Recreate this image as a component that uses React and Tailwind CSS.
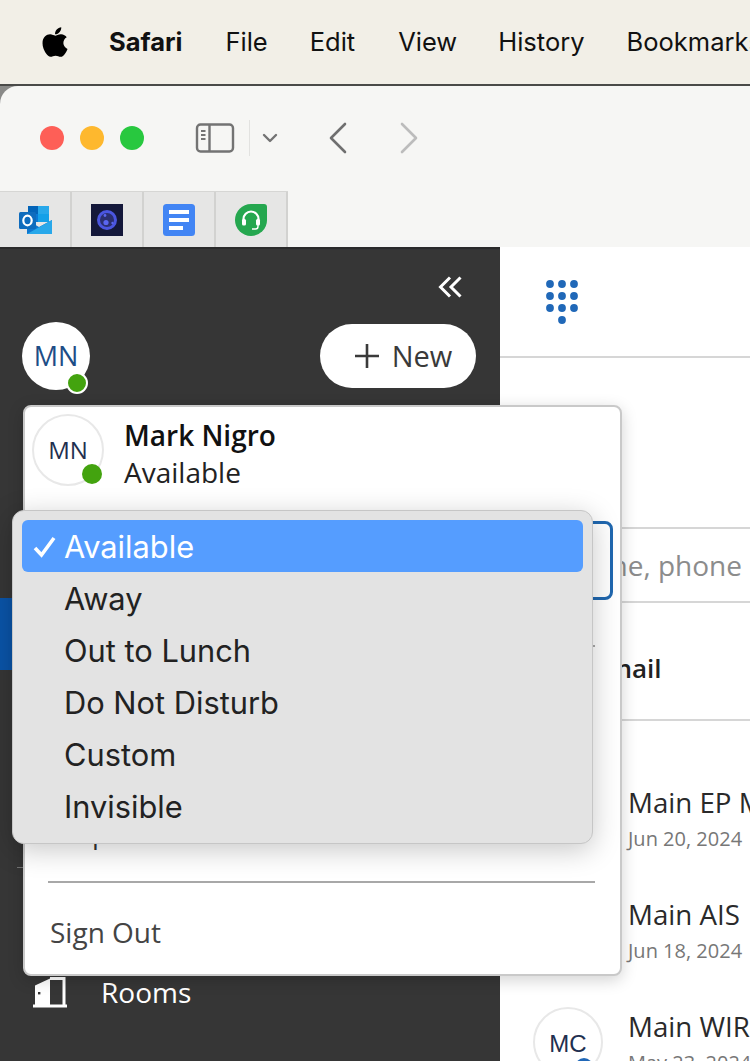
import React from "react";
import { FaApple } from "react-icons/fa";

const sans = "font-['Open_Sans',sans-serif]";
const sys = "font-['Inter',sans-serif]";

function SidebarIcon() {
  return (
    <svg width="40" height="32" viewBox="0 0 40 32" fill="none" stroke="#737373">
      <rect x="2" y="2.5" width="36" height="27" rx="3.5" strokeWidth="2.4" />
      <path d="M14.5 3v26" strokeWidth="2.4" />
      <path d="M6 9h4.5M6 13h4.5M6 17h4.5" strokeWidth="1.8" />
    </svg>
  );
}

function Outlook() {
  return (
    <svg width="33" height="30" viewBox="0 0 33 30">
      <rect x="9" y="1" width="21" height="16" fill="#0a78d4" />
      <rect x="9" y="1" width="10" height="8" fill="#0364b8" />
      <rect x="19" y="1" width="11" height="8" fill="#28a8ea" />
      <rect x="19" y="9" width="11" height="8" fill="#14a0e8" />
      <path d="M8 15l12 7 13-7v14H8z" fill="#0f78d0" />
      <path d="M8 29l25-14v14z" fill="#28a8ea" />
      <rect x="0" y="7" width="17" height="17" rx="1.5" fill="#0f6cbd" />
      <ellipse cx="8.5" cy="15.5" rx="4.2" ry="4.8" fill="none" stroke="#fff" strokeWidth="2.2" />
    </svg>
  );
}

function Orbit() {
  return (
    <svg width="32" height="32" viewBox="0 0 32 32">
      <rect width="32" height="32" fill="#14183a" />
      <circle cx="16" cy="16" r="8.5" fill="#2b2f70" stroke="#4a55e0" strokeWidth="3" />
      <circle cx="15" cy="18.5" r="2.6" fill="#5a66f0" />
      <circle cx="14" cy="11.5" r="1.4" fill="#5a66f0" />
      <circle cx="21.5" cy="19" r="1.2" fill="#5a66f0" />
    </svg>
  );
}

function Docs() {
  return (
    <svg width="32" height="32" viewBox="0 0 32 32">
      <rect width="32" height="32" rx="3.5" fill="#4285f4" />
      <rect x="6" y="6" width="20" height="4" fill="#fff" />
      <rect x="6" y="14" width="20" height="4" fill="#fff" />
      <rect x="6" y="22" width="14" height="4" fill="#fff" />
    </svg>
  );
}

function Freshdesk() {
  return (
    <svg width="32" height="32" viewBox="0 0 32 32">
      <path d="M16 0h13a3 3 0 0 1 3 3v13a16 16 0 1 1-16-16z" fill="#25a74f" />
      <path d="M8.5 18v-3a7.5 7.5 0 0 1 15 0v3" fill="none" stroke="#fff" strokeWidth="2.2" />
      <rect x="7" y="15" width="4" height="6.5" rx="1.6" fill="#fff" />
      <rect x="21" y="15" width="4" height="6.5" rx="1.6" fill="#fff" />
      <path d="M23 21v1.5a2.5 2.5 0 0 1-2.5 2.5H17" fill="none" stroke="#fff" strokeWidth="1.4" />
    </svg>
  );
}

function Dialpad() {
  const pts = [];
  for (let r = 0; r < 3; r++) for (let c = 0; c < 3; c++) pts.push([4 + c * 12, 4 + r * 12]);
  pts.push([16, 40]);
  return (
    <svg width="32" height="44" viewBox="0 0 32 44" fill="#2068b8">
      {pts.map(([x, y]) => (
        <circle key={`${x}-${y}`} cx={x} cy={y} r="3.9" />
      ))}
    </svg>
  );
}

function Door() {
  return (
    <svg width="34" height="31" viewBox="0 0 34 31" fill="none">
      <path d="M2 8.5 L17 1.5 V28 H2 Z" fill="#fff" />
      <rect x="5" y="15" width="2.4" height="2.4" fill="#363636" />
      <path d="M17 1.5H31V28" stroke="#fff" strokeWidth="3" />
      <rect x="0" y="27.5" width="34" height="3" fill="#fff" />
    </svg>
  );
}

function Dot({ className }) {
  return <span className={`absolute rounded-full bg-[#43a30f] ${className}`} />;
}

const statuses = ["Available", "Away", "Out to Lunch", "Do Not Disturb", "Custom", "Invisible"];

function Row({ title, date }) {
  return (
    <div className="flex h-[112px] shrink-0 items-start gap-[25px] pl-[33px]">
      <div className="relative flex h-[70px] w-[70px] shrink-0 items-center justify-center rounded-full border-2 border-[#e8e8e8] bg-white font-['Liberation_Sans',sans-serif] text-[24px] text-[#1f3050]">
        <span className="mt-[4px]">MC</span>
        <span className="absolute bottom-[-1px] right-[8px] h-[18px] w-[18px] rounded-full bg-[#2068b8]" />
      </div>
      <div className={`${sans} whitespace-nowrap`}>
        <div className="text-[27.7px] leading-[38px] text-[#2a2a2a]">{title}</div>
        <div className="mt-[1px] text-[20px] leading-[34px] text-[#777]">{date}</div>
      </div>
    </div>
  );
}

export default function App() {
  return (
    <div className="relative flex h-[1061px] w-[750px] flex-col overflow-hidden bg-[#8a8a88]">
      {/* macOS menu bar */}
      <div className={`${sys} flex h-[86px] shrink-0 items-center border-b-2 border-[#4a4a48] bg-[#f2efe7] pl-[40px] text-[25.5px] text-[#111] whitespace-nowrap`}>
        <FaApple className="mr-[39px] h-[34px] w-[30px] shrink-0 text-black" />
        <span className="mr-[43px] font-bold">Safari</span>
        <span className="mr-[42px]">File</span>
        <span className="mr-[43px]">Edit</span>
        <span className="mr-[41px]">View</span>
        <span className="mr-[42px]">History</span>
        <span>Bookmarks</span>
      </div>

      {/* Browser window */}
      <div className="flex min-h-0 flex-1 flex-col overflow-hidden rounded-tl-[18px] bg-[#f6f6f4]">
        <div className="flex h-[105px] shrink-0 items-center pb-[1px] pl-[40px]">
          <span className="h-[24px] w-[24px] rounded-full bg-[#fe5f57]" />
          <span className="ml-[16px] h-[24px] w-[24px] rounded-full bg-[#feb82e]" />
          <span className="ml-[16px] h-[24px] w-[24px] rounded-full bg-[#28c83f]" />
          <span className="ml-[51px]"><SidebarIcon /></span>
          <span className="ml-[14px] h-[36px] w-[1px] bg-[#e2e2e0]" />
          <svg className="ml-[12px]" width="16" height="12" viewBox="0 0 16 12" fill="none" stroke="#737373" strokeWidth="2.4" strokeLinecap="round" strokeLinejoin="round">
            <path d="M2 3l6 6 6-6" />
          </svg>
          <svg className="ml-[50px]" width="20" height="32" viewBox="0 0 20 32" fill="none" stroke="#6f6f6f" strokeWidth="2.6" strokeLinecap="round" strokeLinejoin="round">
            <path d="M17 2L3 16l14 14" />
          </svg>
          <svg className="ml-[51px]" width="20" height="32" viewBox="0 0 20 32" fill="none" stroke="#bcbcbc" strokeWidth="2.6" strokeLinecap="round" strokeLinejoin="round">
            <path d="M3 2l14 14L3 30" />
          </svg>
        </div>

        <div className="flex h-[56px] w-[288px] shrink-0 border-t border-[#d6d6d4] bg-[#e6e6e5]">
          <div className="flex w-[72px] items-center justify-center border-r-2 border-[#d2d2d0]"><Outlook /></div>
          <div className="flex w-[72px] items-center justify-center border-r-2 border-[#d2d2d0]"><Orbit /></div>
          <div className="flex w-[72px] items-center justify-center border-r-2 border-[#d2d2d0]"><Docs /></div>
          <div className="flex w-[72px] items-center justify-center border-r-2 border-[#d2d2d0]"><Freshdesk /></div>
        </div>

        {/* App */}
        <div className={`${sans} flex min-h-0 flex-1`}>
          {/* Sidebar */}
          <aside className="flex w-[500px] shrink-0 flex-col border-t-2 border-[#2b2b2b] bg-[#363636]">
            <div className="flex justify-end pr-[38px] pt-[27px]">
              <svg width="24" height="22" viewBox="0 0 24 22" fill="none" stroke="#fff" strokeWidth="3">
                <path d="M12 1.5L2.5 11 12 20.5M22.5 1.5L13 11l9.5 9.5" />
              </svg>
            </div>
            <div className="mt-[24px] flex items-center justify-between pl-[22px] pr-[24px]">
              <div className="relative flex h-[68px] w-[68px] items-center justify-center rounded-full bg-white text-[27px] text-[#1d4d86]">
                MN
                <Dot className="bottom-[-4px] right-[2px] h-[22px] w-[22px] border-2 border-white" />
              </div>
              <button className="flex h-[64px] w-[156px] items-center justify-center gap-[13px] rounded-full bg-white pl-[11px] text-[29px] text-[#3a3a3a]">
                <svg width="24" height="24" viewBox="0 0 24 24" stroke="#3a3a3a" strokeWidth="2.6"><path d="M12 0v24M0 12h24" /></svg>
                New
              </button>
            </div>
            <div className="mt-[208px] h-[72px] w-[12px] bg-[#0a54a8]" />
            <div className="ml-[17px] mt-[197px] h-[1px] w-[8px] bg-[#777]" />
            <div className="mt-[103px] flex items-center pl-[33px] text-[28px] font-medium text-white">
              <Door />
              <span className="ml-[34px]">Rooms</span>
            </div>
          </aside>

          {/* Main */}
          <main className="flex min-w-0 flex-1 flex-col bg-white">
            <div className="flex h-[111px] shrink-0 items-center border-b-2 border-[#d6d6d6] pl-[46px] pt-[1px]">
              <Dialpad />
            </div>
            <div className="h-[169px] shrink-0" />
            <div className="flex h-[76px] shrink-0 items-center justify-end whitespace-nowrap border-y-2 border-[#d6d6d6] pr-[8px] text-[28px] text-[#8c8c8c]">
              Enter name, phone
            </div>
            <div className="flex h-[118px] shrink-0 items-center border-b-2 border-[#d6d6d6] pl-[40px] pt-[14px] text-[26px] font-semibold text-[#222]">
              Voicemail
            </div>
            <div className="h-[62px] shrink-0" />
            <Row title="Main EP Meeting" date="Jun 20, 2024" />
            <Row title="Main AIS" date="Jun 18, 2024" />
            <Row title="Main WIRE Update" date="May 23, 2024" />
          </main>
        </div>
      </div>

      {/* User popover */}
      <div className={`${sans} absolute left-[23px] top-[405px] h-[571px] w-[599px] rounded-[8px] border-2 border-[#c9c9c9] bg-white shadow-[0_4px_16px_rgba(0,0,0,0.18)]`}>
        <div className="flex pl-[7px] pt-[7px]">
          <div className="relative flex h-[72px] w-[72px] items-center justify-center rounded-full border-2 border-[#e8e8e8] text-[24px] text-[#1f3050]">
            MN
            <Dot className="bottom-0 right-0 h-[20px] w-[20px]" />
          </div>
          <div className="ml-[20px] mt-[3px]">
            <div className="text-[28px] font-semibold leading-[36px] text-[#111]">Mark Nigro</div>
            <div className="text-[28px] leading-[38px] text-[#222]">Available</div>
          </div>
        </div>
        <div className="ml-[24px] mt-[30px] h-[79px] w-[564px] rounded-[8px] border-[3px] border-[#2068b0]" />
        <div className="ml-[23px] mt-[45px] h-[2px] w-[547px] bg-[#a8a8a8]" />
        <div className="ml-[25px] mt-[168px] text-[27px] leading-[36px] text-[#333]">Help</div>
        <div className="ml-[23px] mt-[30px] h-[2px] w-[547px] bg-[#a8a8a8]" />
        <div className="ml-[25px] mt-[30px] text-[28px] leading-[38px] text-[#444]">Sign Out</div>
      </div>

      {/* Native select menu */}
      <div className={`${sys} absolute left-[12px] top-[510px] h-[334px] w-[581px] rounded-[12px] border border-[#c6c6c6] bg-[#e3e3e3] px-[9px] pt-[9px] text-[30.8px] text-[#222] shadow-[0_6px_28px_rgba(0,0,0,0.22)]`}>
        {statuses.map((s, i) => (
          <div
            key={s}
            className={i === 0
              ? "relative flex h-[52px] items-center rounded-[6px] bg-[#559dff] pl-[42px] pt-[2px] text-white"
              : "flex h-[52px] items-center pl-[42px] pt-[2px]"}
          >
            {i === 0 && (
              <svg className="absolute left-[11px] top-[16px]" width="23" height="22" viewBox="0 0 23 22" fill="none" stroke="#fff" strokeWidth="3.6">
                <path d="M2 12l6.5 7L21 2" />
              </svg>
            )}
            {s}
          </div>
        ))}
      </div>
    </div>
  );
}
